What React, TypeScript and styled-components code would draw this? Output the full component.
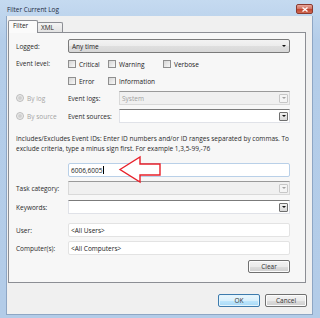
import React from "react";
import styled, { createGlobalStyle, css } from "styled-components";

const GlobalStyle = createGlobalStyle`
  html, body {
    margin: 0;
    padding: 0;
    background: #b9d1ea;
  }
  body {
    font-family: "Open Sans", "Noto Sans", sans-serif;
    font-size: 6.5px;
    color: #222;
  }
`;

const Window = styled.div`
  width: 320px;
  height: 318px;
  display: flex;
  flex-direction: column;
  background: linear-gradient(#c5daf0, #b4cde9 40px, #b3cce8);
  box-sizing: border-box;
`;

const TitleBar = styled.div`
  height: 16px;
  flex: none;
  display: flex;
  align-items: flex-start;
  padding: 0 7px 0 7px;
`;

const Title = styled.div`
  flex: 1;
  margin-top: 5px;
  line-height: 9px;
  color: #1b2a3c;
  font-size: 6.4px;
`;

const CloseButton = styled.div`
  width: 17px;
  height: 10px;
  margin-top: 4px;
  border: 1px solid #8a3a30;
  border-radius: 2px;
  box-sizing: border-box;
  background: linear-gradient(#e8a79c, #d0705f 50%, #c0432e 51%, #d26a52);
  display: flex;
  align-items: center;
  justify-content: center;
`;

const Client = styled.div`
  flex: 1;
  margin: 0 7px 3px 6px;
  background: #f0f0f0;
  border: 1px solid #8ea6c4;
  border-top: none;
  box-sizing: border-box;
  display: flex;
  flex-direction: column;
`;

const Tabs = styled.div`
  display: flex;
  align-items: flex-end;
  height: 12px;
  margin: 4px 0 0 1px;
  position: relative;
  z-index: 1;
`;

const Tab = styled.div<{ $active?: boolean }>`
  box-sizing: border-box;
  border: 1px solid #8c8e94;
  border-bottom: none;
  border-radius: 2px 2px 0 0;
  padding: 0 0 0 4px;
  line-height: 10px;
  ${(p) =>
    p.$active
      ? css`
          width: 30px;
          height: 13px;
          margin-bottom: -1px;
          background: #fbfbfb;
        `
      : css`
          width: 26px;
          height: 10px;
          margin-left: -1px;
          padding-left: 3px;
          line-height: 9px;
          background: linear-gradient(#f3f3f3, #e3e3e3);
        `}
`;

const Panel = styled.div`
  margin: 0 6px 0 1px;
  border: 1px solid #8c8e94;
  background: #f7f7f7;
  padding: 6px 15px 9px 7px;
  display: flex;
  flex-direction: column;
`;

const FormRow = styled.div<{ $h: number; $gap: number; $cols?: string }>`
  display: grid;
  grid-template-columns: ${(p) => p.$cols || "52px 1fr"};
  align-items: center;
  height: ${(p) => p.$h}px;
  margin-top: ${(p) => p.$gap}px;
`;

const Label = styled.div<{ $disabled?: boolean }>`
  white-space: nowrap;
  color: ${(p) => (p.$disabled ? "#a3a3a3" : "#2a2a2a")};
`;

const LevelBlock = styled.div`
  display: grid;
  grid-template-columns: 52px 1fr;
  margin-top: 5px;
`;

const LevelLabel = styled(Label)`
  line-height: 12px;
`;

const CheckGrid = styled.div`
  display: grid;
  grid-template-columns: 40px 55px auto;
  grid-auto-rows: 12px;
  row-gap: 5px;
  align-items: center;
`;

const Check = styled.div`
  display: flex;
  align-items: center;
  gap: 3px;
  white-space: nowrap;
`;

const CheckBox = styled.span`
  width: 8px;
  height: 8px;
  box-sizing: border-box;
  border: 1px solid #8f8f8f;
  background: linear-gradient(135deg, #d6d6d6, #f8f8f8);
`;

const Radio = styled.div`
  display: flex;
  align-items: center;
  gap: 3px;
  color: #a3a3a3;
  white-space: nowrap;
`;

const RadioDot = styled.span`
  width: 8px;
  height: 8px;
  box-sizing: border-box;
  border-radius: 50%;
  border: 1px solid #bcbcbc;
  background: radial-gradient(circle, #cfcfcf 30%, #eaeaea 60%);
`;

const DropSelect = styled.div`
  height: 14px;
  box-sizing: border-box;
  border: 1px solid #7a7a7a;
  border-radius: 2px;
  background: linear-gradient(#f3f3f3, #ececec 50%, #dfdfdf 51%, #d8d8d8);
  display: flex;
  align-items: center;
  padding: 0 3px;
  justify-content: space-between;
`;

const Caret = styled.span<{ $muted?: boolean }>`
  width: 0;
  height: 0;
  border-left: 2px solid transparent;
  border-right: 2px solid transparent;
  border-top: 2px solid ${(p) => (p.$muted ? "#a0a0a0" : "#111")};
`;

const Combo = styled.div<{ $disabled?: boolean }>`
  height: 14px;
  box-sizing: border-box;
  border: 1px solid ${(p) => (p.$disabled ? "#d9d9d9" : "#e0e2e8")};
  border-top: 1px solid ${(p) => (p.$disabled ? "#9a9a9a" : "#7b7b7b")};
  background: ${(p) => (p.$disabled ? "#f0f0f0" : "#fff")};
  color: #a0a0a0;
  display: flex;
  align-items: center;
  justify-content: space-between;
  padding: 0 1px 0 2px;
`;

const ComboButton = styled.span<{ $disabled?: boolean }>`
  width: 9px;
  height: 9px;
  box-sizing: border-box;
  border: 1px solid ${(p) => (p.$disabled ? "#c7c7c7" : "#6f6f6f")};
  border-radius: 1px;
  background: ${(p) => (p.$disabled ? "#f4f4f4" : "linear-gradient(#f0f0f0, #d8d8d8)")};
  display: flex;
  align-items: center;
  justify-content: center;
`;

const TextBox = styled.div<{ $focus?: boolean }>`
  position: relative;
  height: 14px;
  box-sizing: border-box;
  border: 1px solid ${(p) => (p.$focus ? "#b9d0e8" : "#e3e3e3")};
  border-radius: 2px;
  background: #fff;
  display: flex;
  align-items: center;
  padding: 0 2px;
  color: #222;
`;

const Cursor = styled.span`
  display: inline-block;
  width: 1px;
  height: 8px;
  background: #000;
  margin-left: 1px;
`;

const Pointer = styled.svg`
  position: absolute;
  left: 50px;
  top: -8px;
  overflow: visible;
`;

const Help = styled.div`
  margin-top: 11px;
  line-height: 10px;
  white-space: nowrap;
  color: #2a2a2a;
`;

const ClearRow = styled.div`
  display: flex;
  justify-content: flex-end;
  margin-top: 5px;
`;

const Button = styled.div<{ $default?: boolean }>`
  width: 42px;
  height: 13px;
  box-sizing: border-box;
  border: 1px solid ${(p) => (p.$default ? "#3d7bad" : "#707070")};
  border-radius: 2px;
  background: ${(p) =>
    p.$default
      ? "linear-gradient(#eaf6fd, #d9f0fc 50%, #bee6fd 51%, #a7d9f5)"
      : "linear-gradient(#f2f2f2, #ebebeb 50%, #dddddd 51%, #cfcfcf)"};
  box-shadow: inset 0 0 0 1px ${(p) => (p.$default ? "#e4f4fc" : "#fcfcfc")};
  display: flex;
  align-items: center;
  justify-content: center;
  color: #333;
`;

const Footer = styled.div`
  display: flex;
  justify-content: flex-end;
  gap: 5px;
  margin-top: 11px;
  padding-right: 5px;
`;

const CheckItem = ({ label }: { label: string }) => (
  <Check>
    <CheckBox />
    {label}
  </Check>
);

export default function App() {
  return (
    <>
      <GlobalStyle />
      <Window>
        <TitleBar>
          <Title>Filter Current Log</Title>
          <CloseButton>
            <svg width="6" height="5" viewBox="0 0 6 5">
              <path d="M0.5 0.5 L5.5 4.5 M5.5 0.5 L0.5 4.5" stroke="#fff" strokeWidth="1.3" />
            </svg>
          </CloseButton>
        </TitleBar>
        <Client>
          <Tabs>
            <Tab $active>Filter</Tab>
            <Tab>XML</Tab>
          </Tabs>
          <Panel>
            <FormRow $h={14} $gap={0}>
              <Label>Logged:</Label>
              <DropSelect>
                Any time
                <Caret />
              </DropSelect>
            </FormRow>

            <LevelBlock>
              <LevelLabel>Event level:</LevelLabel>
              <CheckGrid>
                <CheckItem label="Critical" />
                <CheckItem label="Warning" />
                <CheckItem label="Verbose" />
                <CheckItem label="Error" />
                <CheckItem label="Information" />
              </CheckGrid>
            </LevelBlock>

            <FormRow $h={14} $gap={4} $cols="52px 51px 1fr">
              <Radio>
                <RadioDot />
                By log
              </Radio>
              <Label>Event logs:</Label>
              <Combo $disabled>
                System
                <ComboButton $disabled>
                  <Caret $muted />
                </ComboButton>
              </Combo>
            </FormRow>

            <FormRow $h={14} $gap={4} $cols="52px 51px 1fr">
              <Radio>
                <RadioDot />
                By source
              </Radio>
              <Label>Event sources:</Label>
              <Combo>
                <span />
                <ComboButton>
                  <Caret />
                </ComboButton>
              </Combo>
            </FormRow>

            <Help>
              Includes/Excludes Event IDs: Enter ID numbers and/or ID ranges separated by commas. To
              <br />
              exclude criteria, type a minus sign first. For example 1,3,5-99,-76
            </Help>

            <FormRow $h={14} $gap={9}>
              <span />
              <TextBox $focus>
                6006,6005
                <Cursor />
                <Pointer width="42" height="27" viewBox="0 0 42 27">
                  <path
                    d="M1 13.5 L21 1 L21 8 L41 8 L41 19 L21 19 L21 26 Z"
                    fill="#fff"
                    stroke="#e8202a"
                    strokeWidth="1.4"
                    strokeLinejoin="miter"
                  />
                </Pointer>
              </TextBox>
            </FormRow>

            <FormRow $h={14} $gap={4}>
              <Label>Task category:</Label>
              <Combo $disabled>
                <span />
                <ComboButton $disabled>
                  <Caret $muted />
                </ComboButton>
              </Combo>
            </FormRow>

            <FormRow $h={14} $gap={5}>
              <Label>Keywords:</Label>
              <Combo>
                <span />
                <ComboButton>
                  <Caret />
                </ComboButton>
              </Combo>
            </FormRow>

            <FormRow $h={14} $gap={9}>
              <Label>User:</Label>
              <TextBox>&lt;All Users&gt;</TextBox>
            </FormRow>

            <FormRow $h={14} $gap={4}>
              <Label>Computer(s):</Label>
              <TextBox>&lt;All Computers&gt;</TextBox>
            </FormRow>

            <ClearRow>
              <Button>Clear</Button>
            </ClearRow>
          </Panel>
          <Footer>
            <Button $default>OK</Button>
            <Button>Cancel</Button>
          </Footer>
        </Client>
      </Window>
    </>
  );
}
